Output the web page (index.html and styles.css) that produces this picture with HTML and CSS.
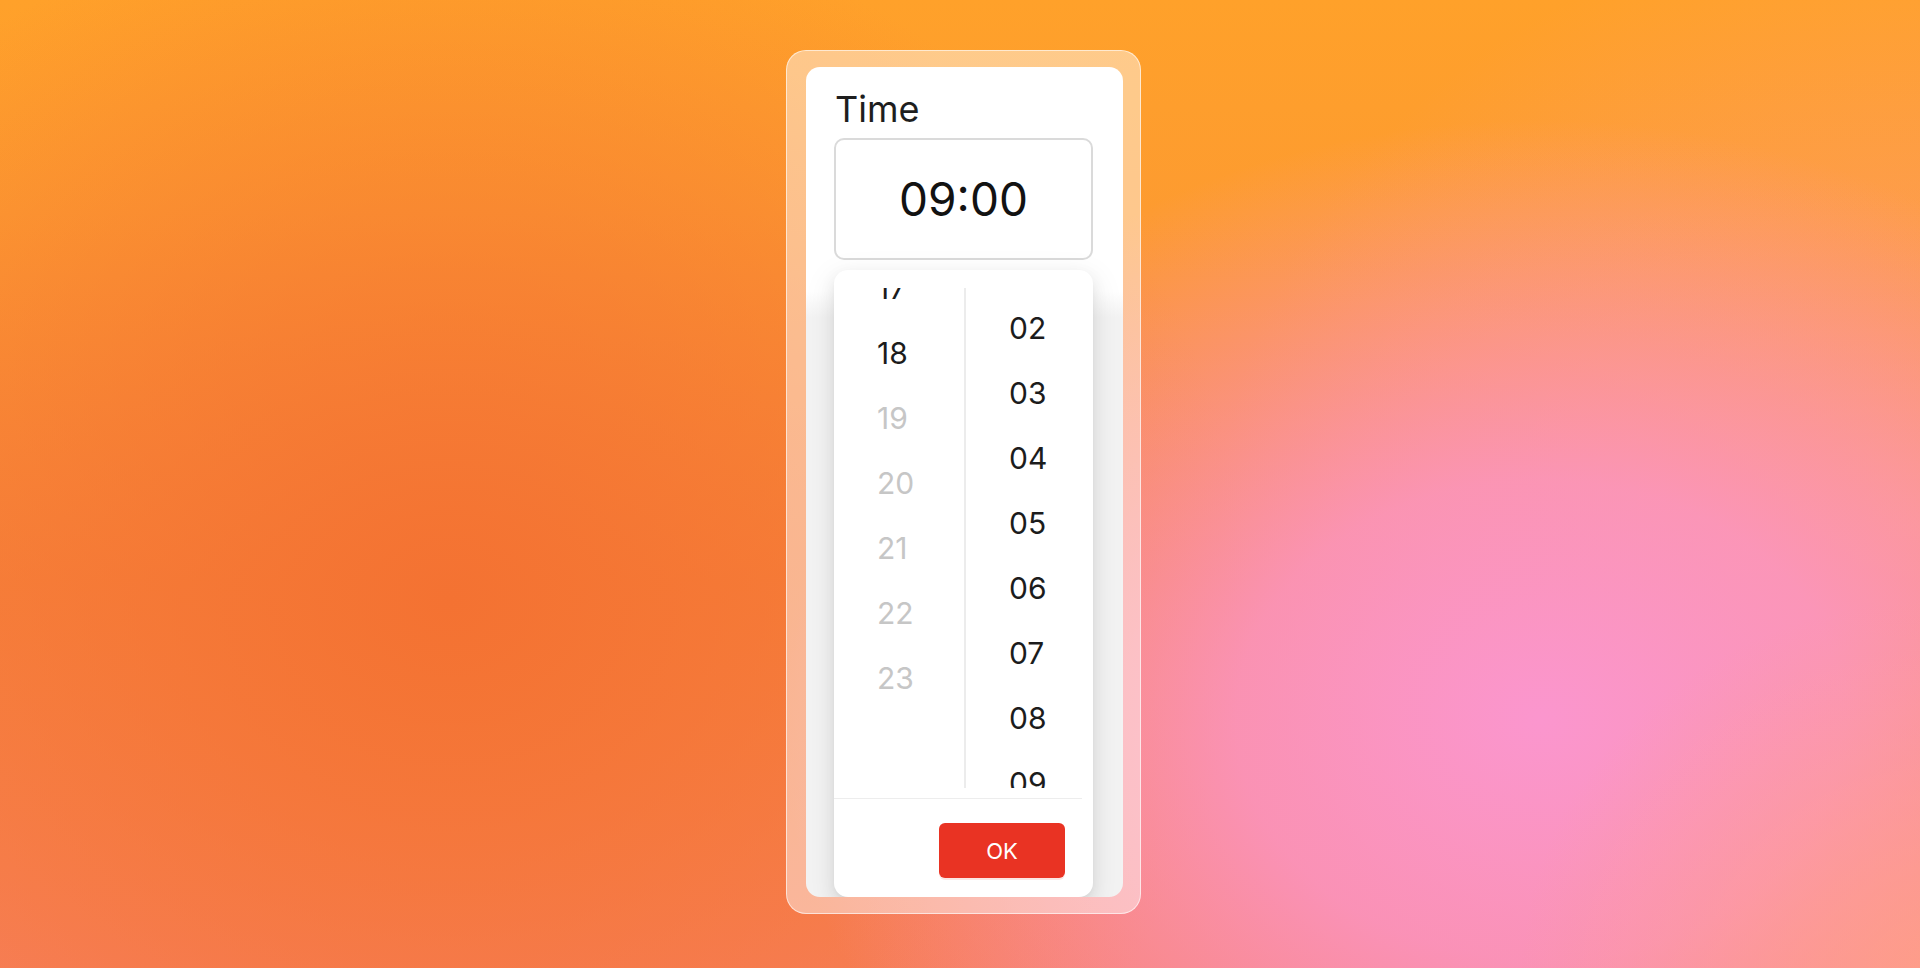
FILE: index.html
```html
<!DOCTYPE html>
<html lang="en">
<head>
    <meta charset="UTF-8">
    <meta name="viewport" content="width=device-width, initial-scale=1.0">
    <title>Time</title>
    <link rel="stylesheet" href="styles.css">
</head>
<body>
    <main class="stage">
        <div class="frame">
            <div class="card">
                <label class="field-label" for="timeValue">Time</label>
                <div class="time-input" id="timeValue">09:00</div>

                <div class="picker">
                    <div class="picker-columns">
                        <div class="picker-column hours">
                            <ul class="picker-list">
                                <li class="picker-cell">17</li>
                                <li class="picker-cell">18</li>
                                <li class="picker-cell disabled">19</li>
                                <li class="picker-cell disabled">20</li>
                                <li class="picker-cell disabled">21</li>
                                <li class="picker-cell disabled">22</li>
                                <li class="picker-cell disabled">23</li>
                            </ul>
                        </div>
                        <div class="picker-column minutes">
                            <ul class="picker-list">
                                <li class="picker-cell">02</li>
                                <li class="picker-cell">03</li>
                                <li class="picker-cell">04</li>
                                <li class="picker-cell">05</li>
                                <li class="picker-cell">06</li>
                                <li class="picker-cell">07</li>
                                <li class="picker-cell">08</li>
                                <li class="picker-cell">09</li>
                            </ul>
                        </div>
                    </div>
                    <div class="picker-footer">
                        <button class="ok-button" type="button">OK</button>
                    </div>
                </div>
            </div>
        </div>
    </main>
</body>
</html>
```

FILE: styles.css
```css
* {
    margin: 0;
    padding: 0;
    box-sizing: border-box;
}

html, body {
    height: 100%;
}

body {
    font-family: Inter, 'Noto Sans', sans-serif;
    color: #1c1c1c;
    overflow: hidden;
    background:
        radial-gradient(ellipse 420px 380px at 1940px 980px, rgba(255, 160, 135, 0.85) 0%, rgba(255, 160, 135, 0) 100%),
        radial-gradient(ellipse 760px 600px at 1540px 720px, rgba(251, 150, 206, 1) 0%, rgba(251, 150, 206, 0.8) 40%, rgba(251, 150, 206, 0) 100%),
        radial-gradient(ellipse 700px 600px at 1920px 520px, rgba(255, 160, 125, 0.7) 0%, rgba(255, 160, 125, 0) 100%),
        radial-gradient(ellipse 800px 700px at 450px 600px, rgba(244, 114, 50, 1) 0%, rgba(244, 114, 50, 0) 100%),
        linear-gradient(180deg, #ffa12a 0%, #fd9b30 22%, #f7843c 60%, #f7805c 100%);
}

.stage {
    display: flex;
    justify-content: center;
    padding: 50px 0 0 7px;
}

.frame {
    width: 355px;
    height: 864px;
    padding: 16px 17px 16px 19px;
    background: rgba(255, 255, 255, 0.45);
    border: 1px solid rgba(255, 255, 255, 0.6);
    border-radius: 20px;
}

.card {
    height: 100%;
    display: flex;
    flex-direction: column;
    background: linear-gradient(180deg, #fff 0, #fff 225px, #f3f3f3 250px);
    border-radius: 14px;
    padding: 20px 30px 0 28px;
    overflow: hidden;
}

.field-label {
    display: block;
    font-size: 36px;
    line-height: 44px;
    margin: 0 0 7px 1px;
    color: #1e1e1e;
}

.time-input {
    height: 122px;
    border: 2px solid #dadada;
    border-radius: 10px;
    background: white;
    display: flex;
    align-items: center;
    justify-content: center;
    font-size: 46px;
    color: #121212;
}

.picker {
    flex: 1;
    margin-top: 10px;
    background: white;
    border-radius: 14px;
    box-shadow: 0 6px 16px 0 rgba(0, 0, 0, 0.08),
                0 3px 6px -4px rgba(0, 0, 0, 0.12),
                0 9px 28px 8px rgba(0, 0, 0, 0.05);
    display: flex;
    flex-direction: column;
}

.picker-columns {
    display: flex;
    padding-top: 18px;
}

.picker-column {
    height: 500px;
    overflow: hidden;
}

.picker-column.hours {
    width: 132px;
    border-right: 2px solid #ececec;
}

.picker-column.minutes {
    flex: 1;
}

.picker-list {
    list-style: none;
}

/* colonnes défilées : 17 à moitié masqué en haut, 02 juste sous le bord */
.hours .picker-list {
    margin-top: -32px;
}

.minutes .picker-list {
    margin-top: 8px;
}

.picker-cell {
    height: 65px;
    line-height: 65px;
    padding-left: 43px;
    font-size: 30px;
    color: #1c1c1c;
}

.picker-cell.disabled {
    color: #c6c6c6;
}

.picker-footer {
    margin: 10px 11px 0 0;
    border-top: 1px solid #ededed;
    padding: 24px 17px 18px 0;
    display: flex;
    justify-content: flex-end;
}

.ok-button {
    width: 126px;
    height: 55px;
    border: none;
    border-radius: 6px;
    background: #e93323;
    color: white;
    font-family: inherit;
    font-size: 22px;
    cursor: pointer;
    box-shadow: 0 2px 0 rgba(233, 51, 35, 0.12);
}

.ok-button:hover {
    background: #d42a1b;
}
```
